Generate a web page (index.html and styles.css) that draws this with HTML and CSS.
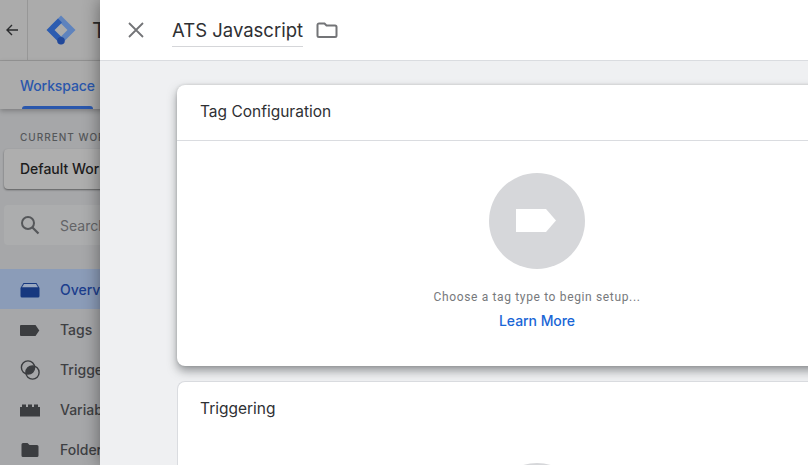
FILE: index.html
```html
<!DOCTYPE html>
<html lang="en">
<head>
<meta charset="utf-8">
<title>ATS Javascript</title>
<link rel="stylesheet" href="styles.css">
</head>
<body>
<div class="app">
  <div class="back">
    <header class="topbar">
      <div class="back-btn">
        <svg width="14" height="14" viewBox="0 0 14 14"><path d="M13 7H2M7 2 2 7l5 5" fill="none" stroke="#2b2c2e" stroke-width="1.400"/></svg>
      </div>
      <div class="brand">
        <svg width="32" height="32" viewBox="0 0 32 32">
          <path d="M16 1.500 30.500 16 16 30.500 12 26.500 22.500 16 16 9.500 9.500 16 5.500 12Z" fill="#5f83bd"/>
          <path d="M13 4.500 1.500 16 13 27.500 17 23.500 9.500 16 17 8.500Z" fill="#2c5cb0"/>
          <circle cx="16" cy="26.700" r="3.800" fill="#21489a"/>
        </svg>
        <span class="brand-name">Tag</span>
      </div>
    </header>
    <nav class="tabs"><div class="tab">Workspace</div></nav>
    <aside class="sidebar">
      <div class="side-label">CURRENT WORKSPACE</div>
      <div class="ws-select">Default Workspace</div>
      <div class="search">
        <svg width="24" height="24" viewBox="0 0 24 24"><circle cx="10" cy="10" r="6" fill="none" stroke="#55575a" stroke-width="2"/><path d="m14.500 14.500 6 6" stroke="#55575a" stroke-width="2.200"/></svg>
        <span>Search</span>
      </div>
      <ul class="menu">
        <li class="item active">
          <svg width="24" height="24" viewBox="0 0 24 24"><path d="M5.500 6h13l3 5v8a1.500 1.500 0 0 1-1.500 1.500H4A1.500 1.500 0 0 1 2.500 19v-8Z" fill="#17387f"/><path d="M6 7h12l2 3.200H4Z" fill="#9aa8c0"/></svg>
          <span>Overview</span>
        </li>
        <li class="item">
          <svg width="24" height="24" viewBox="0 0 24 24"><path d="M3 8h14.500l3.800 5.500-3.800 5.500H3a1 1 0 0 1-1-1V9a1 1 0 0 1 1-1Z" fill="#3b3d40"/></svg>
          <span>Tags</span>
        </li>
        <li class="item">
          <svg width="24" height="24" viewBox="0 0 24 24"><circle cx="10" cy="10.500" r="6.600" fill="none" stroke="#3b3d40" stroke-width="1.400"/><circle cx="14.500" cy="15.500" r="6.600" fill="none" stroke="#3b3d40" stroke-width="1.400"/><path d="M16.470 9.200A6.600 6.600 0 0 1 8.030 16.800 6.600 6.600 0 0 1 16.470 9.200Z" fill="#3b3d40"/></svg>
          <span>Triggers</span>
        </li>
        <li class="item">
          <svg width="24" height="24" viewBox="0 0 24 24"><path d="M2 10h2V7.500h4V10h2V7.500h4V10h2V7.500h4V10h2v9.500H2Z" fill="#3b3d40"/></svg>
          <span>Variables</span>
        </li>
        <li class="item">
          <svg width="24" height="24" viewBox="0 0 24 24"><path d="M5 6h4.500l2 2H19a1.500 1.500 0 0 1 1.500 1.500v9A1.500 1.500 0 0 1 19 20H5a1.500 1.500 0 0 1-1.500-1.500v-11A1.500 1.500 0 0 1 5 6Z" fill="#3b3d40"/></svg>
          <span>Folders</span>
        </li>
      </ul>
    </aside>
  </div>

  <section class="drawer">
    <header class="drawer-head">
      <button class="close" type="button" aria-label="Close">
        <svg width="24" height="24" viewBox="0 0 24 24"><path d="M5 5l14 14M19 5 5 19" stroke="#737477" stroke-width="1.800"/></svg>
      </button>
      <div class="title">ATS Javascript</div>
      <svg class="folder" width="24" height="24" viewBox="0 0 24 24"><path d="M4.500 5.500h5l2 2h8.500a1.500 1.500 0 0 1 1.500 1.500v8.500a1.500 1.500 0 0 1-1.500 1.500H4a1.500 1.500 0 0 1-1.500-1.500V7a1.500 1.500 0 0 1 2-1.500Z" fill="none" stroke="#737477" stroke-width="2"/></svg>
    </header>
    <div class="drawer-body">
      <article class="card raised">
        <h2 class="card-title bordered">Tag Configuration</h2>
        <div class="card-empty">
          <div class="disc">
            <svg class="tag-glyph" width="42" height="26" viewBox="0 0 42 26"><path d="M0 1h30l10 11.500L30 24H0Z" fill="#fff"/></svg>
          </div>
          <p class="hint">Choose a tag type to begin setup...</p>
          <a class="learn" href="#">Learn More</a>
        </div>
      </article>
      <article class="card flat">
        <h2 class="card-title">Triggering</h2>
        <div class="card-empty lower"><div class="disc"></div></div>
      </article>
    </div>
  </section>
</div>
</body>
</html>
```
FILE: styles.css
```css
* { box-sizing: border-box; }
html, body { margin: 0; height: 100%; overflow: hidden; }
body { font-family: Inter, Roboto, "Liberation Sans", sans-serif; background: #a6a7a9; }

.app { position: relative; width: 808px; height: 465px; overflow: hidden; }

.back { width: 808px; height: 465px; display: flex; flex-direction: column; background: #a6a7a9; }

.topbar { height: 61px; flex: none; display: flex; background: #ababab; border-bottom: 1px solid #979797; }
.back-btn { width: 28px; display: flex; align-items: center; justify-content: center; border-right: 1px solid #979797; padding-right: 3px; }
.brand { display: flex; align-items: center; gap: 15px; padding-left: 17px; }
.brand-name { font-size: 22px; color: #2c2c2c; white-space: nowrap; }

.tabs { height: 48px; flex: none; padding-left: 20px; background: #ababab; box-shadow: 0 2px 5px rgba(0,0,0,.25); position: relative; display: flex; }
.tab { position: relative; width: 75px; height: 48px; font-size: 14px; font-weight: 500; color: #2a57ac; padding-top: 16px; white-space: nowrap; letter-spacing: -.1px; }
.tab::after { content: ""; position: absolute; left: 2px; right: 2px; bottom: 0; height: 3px; background: #2a57ac; border-radius: 3px 3px 0 0; }

.sidebar { flex: 1; padding-top: 22px; display: flex; flex-direction: column; }
.side-label { font-size: 10px; font-weight: 500; letter-spacing: 1px; color: #55575a; padding-left: 20px; white-space: nowrap; height: 12px; line-height: 12px; }
.ws-select { margin: 6px 0 0 4px; width: 300px; height: 40px; line-height: 40px; padding-left: 16px; font-size: 14px; font-weight: 500; color: #1c1c1c; background: #aeaeae; border-radius: 4px; box-shadow: 0 1px 2px rgba(0,0,0,.45); white-space: nowrap; }
.search { margin: 16px 0 0 4px; width: 300px; height: 40px; display: flex; align-items: center; gap: 18px; padding-left: 14px; background: #acadae; border-radius: 4px; font-size: 14px; color: #636467; }

.menu { list-style: none; margin: 24px 0 0; padding: 0; }
.item { height: 40px; display: flex; align-items: center; gap: 18px; padding-left: 18px; font-size: 14px; font-weight: 500; color: #3e4043; }
.item.active { background: #8b9cb8; color: #1c3e8d; }

.drawer { position: absolute; left: 100px; top: 0; width: 708px; height: 465px; display: flex; flex-direction: column; background: #eff0f2; box-shadow: 0 0 16px rgba(0,0,0,.42); }
.drawer-head { height: 61px; flex: none; display: flex; align-items: center; background: #fff; border-bottom: 1px solid #dadce0; padding-left: 24px; }
.close { width: 24px; height: 24px; padding: 0; border: 0; background: none; display: flex; }
.title { margin-left: 24px; width: 131px; height: 33px; line-height: 32px; font-size: 18.500px; color: #2f3033; border-bottom: 1px solid #d5d6d9; white-space: nowrap; }
.folder { margin-left: 12px; }

.drawer-body { flex: 1; padding: 24px 0 0 77px; display: flex; flex-direction: column; gap: 15px; overflow: hidden; }
.card { flex: none; width: 660px; background: #fff; border-radius: 8px 0 0 8px; }
.raised { height: 281px; box-shadow: 0 5px 10px rgba(60,64,67,.5), 0 0 3px rgba(60,64,67,.2); position: relative; }
.flat { height: 300px; border: 1px solid #dadce0; border-right: 0; }
.card-title { margin: 0; height: 54px; line-height: 53px; padding-left: 23px; font-size: 15.500px; font-weight: 400; color: #2f3033; }
.flat .card-title { padding-left: 22px; }
.card-title.bordered { height: 56px; line-height: 54px; border-bottom: 1px solid #dadce0; }
.card-empty { display: flex; flex-direction: column; align-items: center; width: 720px; padding-top: 32px; }
.flat .card-empty { margin-left: -1px; }
.lower { padding-top: 27px; }
.disc { width: 96px; height: 96px; flex: none; border-radius: 50%; background: #d6d7da; display: flex; align-items: center; justify-content: center; }
.hint { margin: 20px 0 0; font-family: Roboto, sans-serif; font-size: 12px; line-height: 16px; letter-spacing: .65px; color: #77797c; white-space: nowrap; }
.learn { margin-top: 8px; font-size: 14px; line-height: 16px; font-weight: 500; color: #1a66d6; text-decoration: none; letter-spacing: -.05px; }
```
